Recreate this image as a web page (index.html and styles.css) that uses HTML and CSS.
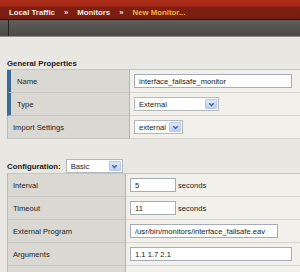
FILE: index.html
```html
<!DOCTYPE html>
<html>
<head>
<meta charset="utf-8">
<link rel="stylesheet" href="styles.css">
</head>
<body>
<header class="topbar">
  <nav class="crumbs">
    <span class="crumb">Local Traffic</span>
    <span class="sep">»</span>
    <span class="crumb">Monitors</span>
    <span class="sep">»</span>
    <span class="crumb current">New Monitor...</span>
  </nav>
</header>
<div class="toolbar"><span class="tool-cell"></span></div>

<main class="content">
  <h2 class="section-title">General Properties</h2>
  <div class="props props-general">
    <div class="label req">Name</div>
    <div class="value"><span class="input w-name">interface_failsafe_monitor</span></div>
    <div class="label req">Type</div>
    <div class="value"><span class="select w-type">External<span class="drop"><svg viewBox="0 0 10 10" width="9" height="9"><path d="M2.5 3.5 L5 6 L7.5 3.5" fill="none" stroke="#4d6185" stroke-width="1.6"/></svg></span></span></div>
    <div class="label">Import Settings</div>
    <div class="value"><span class="select w-import">external<span class="drop"><svg viewBox="0 0 10 10" width="9" height="9"><path d="M2.5 3.5 L5 6 L7.5 3.5" fill="none" stroke="#4d6185" stroke-width="1.6"/></svg></span></span></div>
  </div>

  <div class="config-line">
    <span class="config-label">Configuration:</span>
    <span class="select w-basic">Basic<span class="drop"><svg viewBox="0 0 10 10" width="9" height="9"><path d="M2.5 3.5 L5 6 L7.5 3.5" fill="none" stroke="#4d6185" stroke-width="1.6"/></svg></span></span>
  </div>

  <div class="props props-config">
    <div class="label">Interval</div>
    <div class="value"><span class="input w-num">5</span><span class="unit">seconds</span></div>
    <div class="label">Timeout</div>
    <div class="value"><span class="input w-num">11</span><span class="unit">seconds</span></div>
    <div class="label">External Program</div>
    <div class="value"><span class="input w-prog">/usr/bin/monitors/interface_failsafe.eav</span></div>
    <div class="label">Arguments</div>
    <div class="value"><span class="input w-args">1.1 1.7 2.1</span></div>
    <div class="label last"></div>
    <div class="value last"></div>
  </div>
</main>
</body>
</html>
```

FILE: styles.css
```css
* { box-sizing: border-box; }

body {
  margin: 0;
  height: 272px;
  background: #e9e7e2;
  font-family: "Liberation Sans", Arial, sans-serif;
  font-size: 7.6px;
  color: #1e1e1e;
  overflow: hidden;
}

.topbar {
  height: 20px;
  background: linear-gradient(#ab2c19 0, #a42816 6px, #801f13 7px, #781c11 100%);
  border-bottom: 1px solid #3a1209;
  padding: 7px 0 0 9px;
}

.crumbs {
  display: flex;
  gap: 9px;
  font-weight: bold;
  font-size: 7.8px;
  line-height: 12px;
  color: #f3ece0;
}

.crumbs .sep { color: #eadfd0; }
.crumbs .current { color: #f2b53c; }

.toolbar {
  height: 17px;
  background: linear-gradient(#5e5d59, #4c4b48);
  border-bottom: 1px solid #8d8c88;
  display: flex;
}

.tool-cell {
  width: 9px;
  border-right: 1px solid #232321;
}

.content {
  padding: 21px 0 0 7px;
}

.section-title {
  margin: 0;
  font-size: 7.8px;
  line-height: 11px;
  font-weight: bold;
  color: #1a1a1a;
}

.props {
  display: grid;
  border-top: 1px solid #c7c5bf;
}

.props-general { grid-template-columns: 123px 1fr; }
.props-config  { grid-template-columns: 119px 1fr; }

.label {
  background: #dad8d2;
  border-left: 1px solid #bdbbb5;
  border-bottom: 1px solid #c7c5bf;
  border-right: 1px solid #b5b3ad;
  padding-left: 5px;
  display: flex;
  align-items: center;
  height: 23px;
  color: #222;
}

.label.req {
  border-left: 4px solid #3d6a98;
  padding-left: 6px;
}

.value {
  background: #f1f0eb;
  border-bottom: 1px solid #d6d4ce;
  display: flex;
  align-items: center;
  padding-left: 4px;
  height: 23px;
}

.props .last {
  height: 7px;
  border-bottom: 0;
}

.input, .select {
  display: inline-flex;
  align-items: center;
  height: 14px;
  background: #fff;
  border: 1px solid #a5acb5;
  padding-left: 4px;
  color: #1a1a1a;
  white-space: nowrap;
  overflow: hidden;
}

.w-name { width: 158px; }
.w-num  { width: 46px; }
.w-prog { width: 148px; }
.w-args { width: 162px; }

.select {
  justify-content: space-between;
  padding-right: 1px;
  border-color: #b3b8bf;
}

.w-type   { width: 85px; }
.w-import { width: 49px; }
.w-basic  { width: 57px; }

.drop {
  width: 12px;
  height: 10px;
  background: linear-gradient(#dce7fb, #bccff5);
  border: 1px solid #b6c8ec;
  border-radius: 1px;
  display: flex;
  align-items: center;
  justify-content: center;
}

.unit {
  margin-left: 2px;
  color: #222;
}

.config-line {
  display: flex;
  align-items: center;
  gap: 5px;
  margin-top: 20px;
  height: 14px;
}

.config-label {
  font-weight: bold;
  font-size: 7.8px;
  color: #1a1a1a;
}
```
